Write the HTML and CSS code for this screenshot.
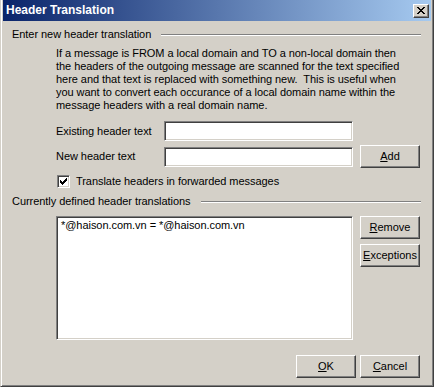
FILE: index.html
```html
<!DOCTYPE html>
<html lang="en">
<head>
  <meta charset="UTF-8">
  <title>Header Translation</title>
  <link rel="stylesheet" href="styles.css">
</head>
<body>
  <div class="window">
    <div class="titlebar">
      <span class="title">Header Translation</span>
      <button class="close-btn" aria-label="Close">
        <svg width="8" height="7" viewBox="0 0 8 7"><path d="M0 0h2v1h1v1h2v-1h1v-1h2v1h-1v1h-1v1h-1v1h1v1h1v1h1v1h-2v-1h-1v-1h-2v1h-1v1h-2v-1h1v-1h1v-1h1v-1h-1v-1h-1v-1h-1z" fill="#000"/></svg>
      </button>
    </div>

    <div class="content">
      <div class="group-head">
        <span>Enter new header translation</span>
        <div class="groove"></div>
      </div>

      <p class="desc">If a message is FROM a local domain and TO a non-local domain then<br>the headers of the outgoing message are scanned for the text specified<br>here and that text is replaced with something new.&nbsp; This is useful when<br>you want to convert each occurance of a local domain name within the<br>message headers with a real domain name.</p>

      <div class="field-row first">
        <label for="existing">Existing header text</label>
        <input type="text" id="existing" class="edit">
      </div>
      <div class="field-row">
        <label for="newtext">New header text</label>
        <input type="text" id="newtext" class="edit">
        <button class="btn add-btn"><u>A</u>dd</button>
      </div>

      <div class="check-row">
        <span class="checkbox">
          <svg width="7" height="7" viewBox="0 0 7 7"><path d="M0 2h1v1h1v1h1v-1h1v-1h1v-1h1v-1h1v3h-1v1h-1v1h-1v1h-1v1h-1v-1h-1v-1h-1z" fill="#000"/></svg>
        </span>
        <span>Translate headers in forwarded messages</span>
      </div>

      <div class="group-head second">
        <span>Currently defined header translations</span>
        <div class="groove"></div>
      </div>

      <div class="list-row">
        <div class="listbox">
          <div class="list-item">*@haison.com.vn = *@haison.com.vn</div>
        </div>
        <div class="side-buttons">
          <button class="btn"><u>R</u>emove</button>
          <button class="btn"><u>E</u>xceptions</button>
        </div>
      </div>

      <div class="footer">
        <button class="btn"><u>O</u>K</button>
        <button class="btn"><u>C</u>ancel</button>
      </div>
    </div>
  </div>
</body>
</html>
```

FILE: styles.css
```css
body {
  margin: 0;
  font-family: "Liberation Sans", Arial, sans-serif;
  font-size: 11px;
  line-height: 13px;
  letter-spacing: -0.05px;
  color: #000;
  background: #D4D0C8;
}
.window {
  width: 434px;
  height: 387px;
  box-sizing: border-box;
  background: #D4D0C8;
  border: 1px solid;
  border-top: 0;
  border-color: #D4D0C8 #404040 #404040 #D4D0C8;
  box-shadow: inset 1px 0 #fff, inset -1px -1px #808080;
  padding: 0 2px 2px 2px;
}
.titlebar {
  height: 21px;
  display: flex;
  align-items: center;
  justify-content: space-between;
  padding: 0 2px 0 3px;
  background: linear-gradient(to right, #0A246A, #A6CAF0);
}
.title {
  color: #fff;
  font-weight: bold;
  font-size: 12px;
  letter-spacing: 0;
}
.close-btn {
  width: 16px;
  height: 14px;
  padding: 0;
  display: flex;
  align-items: center;
  justify-content: center;
  background: #D4D0C8;
  border: 1px solid;
  border-color: #fff #404040 #404040 #fff;
  box-shadow: inset -1px -1px #808080;
}
.content {
  padding: 7px 11px 0 9px;
}
.group-head {
  display: flex;
  align-items: center;
  gap: 10px;
}
.group-head.second {
  margin-top: 7px;
}
.groove {
  flex: 1;
  height: 0;
  border-top: 1px solid #808080;
  border-bottom: 1px solid #fff;
  margin-right: -1px;
}
.desc {
  margin: 6px 0 0 44px;
}
.field-row {
  display: flex;
  align-items: center;
  height: 23px;
  margin-top: 4px;
  padding-left: 44px;
}
.field-row.first {
  height: 20px;
  margin-top: 9px;
}
.field-row label {
  width: 108px;
}
.edit {
  width: 189px;
  height: 20px;
  box-sizing: border-box;
  margin: 0;
  padding: 1px 2px;
  font: inherit;
  background: #fff;
  border: 1px solid;
  border-color: #808080 #fff #fff #808080;
  box-shadow: inset 1px 1px #404040, inset -1px -1px #D4D0C8;
  outline: none;
}
.btn {
  width: 60px;
  height: 23px;
  padding: 0;
  font: inherit;
  color: #000;
  background: #D4D0C8;
  border: 1px solid;
  border-color: #fff #404040 #404040 #fff;
  box-shadow: inset -1px -1px #808080;
}
.add-btn {
  margin-left: 7px;
}
.check-row {
  display: flex;
  align-items: center;
  gap: 6px;
  margin-top: 7px;
  padding-left: 45px;
}
.checkbox {
  width: 13px;
  height: 13px;
  box-sizing: border-box;
  display: flex;
  align-items: center;
  justify-content: center;
  background: #fff;
  border: 1px solid;
  border-color: #808080 #fff #fff #808080;
  box-shadow: inset 1px 1px #404040, inset -1px -1px #D4D0C8;
}
.list-row {
  display: flex;
  gap: 7px;
  margin-top: 8px;
  padding-left: 44px;
}
.listbox {
  width: 297px;
  height: 124px;
  box-sizing: border-box;
  padding: 2px 4px;
  background: #fff;
  border: 1px solid;
  border-color: #808080 #fff #fff #808080;
  box-shadow: inset 1px 1px #404040, inset -1px -1px #D4D0C8;
}
.side-buttons {
  display: flex;
  flex-direction: column;
  gap: 5px;
}
.footer {
  display: flex;
  justify-content: flex-end;
  gap: 4px;
  margin-top: 15px;
}
```
